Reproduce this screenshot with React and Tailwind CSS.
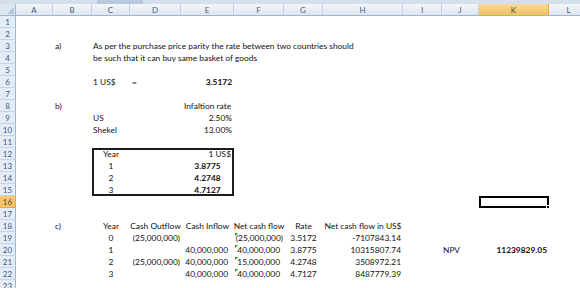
const cols = [
    ['A', 37], ['B', 39], ['C', 38], ['D', 51], ['E', 53], ['F', 50],
    ['G', 39], ['H', 80], ['I', 39], ['J', 37], ['K', 70], ['L', 40],
];

// cell content keyed by row number, then column letter
const sheet = {
    3: {
        B: { t: 'a)', cls: 'pl-[2px]' },
        C: { t: 'As per the purchase price parity the rate between two countries should', cls: 'pl-[1px]' },
    },
    4: { C: { t: 'be such that it can buy same basket of goods', cls: 'pl-[1px]' } },
    6: {
        C: { t: '1 US$', cls: 'pl-[1px]' },
        D: { t: '=', cls: 'pl-[2px]' },
        E: { t: '3.5172', cls: 'justify-end pr-[2px] font-bold' },
    },
    8: {
        B: { t: 'b)', cls: 'pl-[2px]' },
        E: { t: 'Infaltion rate', cls: 'justify-center' },
    },
    9: {
        C: { t: 'US', cls: 'pl-[1px]' },
        E: { t: '2.50%', cls: 'justify-end pr-[2px]' },
    },
    10: {
        C: { t: 'Shekel', cls: 'pl-[1px]' },
        E: { t: '13.00%', cls: 'justify-end pr-[2px]' },
    },
    // boxed table C12:E15
    12: {
        C: { t: 'Year', cls: 'justify-center shadow-[inset_2px_2px_0_0_#1c1c1c]' },
        D: { t: '', cls: 'shadow-[inset_0_2px_0_0_#1c1c1c]' },
        E: { t: '1 US$', cls: 'justify-end pr-[3px] shadow-[inset_-2px_2px_0_0_#1c1c1c]' },
    },
    13: {
        C: { t: '1', cls: 'justify-center shadow-[inset_2px_0_0_0_#1c1c1c]' },
        E: { t: '3.8775', cls: 'justify-center font-bold shadow-[inset_-2px_0_0_0_#1c1c1c]' },
    },
    14: {
        C: { t: '2', cls: 'justify-center shadow-[inset_2px_0_0_0_#1c1c1c]' },
        E: { t: '4.2748', cls: 'justify-center font-bold shadow-[inset_-2px_0_0_0_#1c1c1c]' },
    },
    15: {
        C: { t: '3', cls: 'justify-center shadow-[inset_2px_-2px_0_0_#1c1c1c]' },
        D: { t: '', cls: 'shadow-[inset_0_-2px_0_0_#1c1c1c]' },
        E: { t: '4.7127', cls: 'justify-center font-bold shadow-[inset_-2px_-2px_0_0_#1c1c1c]' },
    },
    18: {
        B: { t: 'c)', cls: 'pl-[2px]' },
        C: { t: 'Year', cls: 'justify-center' },
        D: { t: 'Cash Outflow', cls: 'justify-center' },
        E: { t: 'Cash Inflow', cls: 'justify-center' },
        F: { t: 'Net cash flow', cls: 'justify-center' },
        G: { t: 'Rate', cls: 'justify-center' },
        H: { t: 'Net cash flow in US$', cls: 'justify-center' },
    },
    19: {
        C: { t: '0', cls: 'justify-center' },
        D: { t: '(25,000,000)', cls: 'justify-end pr-[1px]' },
        F: { t: '(25,000,000)', cls: 'justify-end pr-[1px]', flag: true },
        G: { t: '3.5172', cls: 'justify-center' },
        H: { t: '-7107843.14', cls: 'justify-end pr-[2px]' },
    },
    20: {
        C: { t: '1', cls: 'justify-center' },
        E: { t: '40,000,000', cls: 'justify-end pr-[6px]' },
        F: { t: '40,000,000', cls: 'justify-end pr-[4px]', flag: true },
        G: { t: '3.8775', cls: 'justify-center' },
        H: { t: '10315807.74', cls: 'justify-end pr-[2px]' },
        J: { t: 'NPV', cls: 'pl-[1px]' },
        K: { t: '11239829.05', cls: 'justify-end pr-[2px] font-bold' },
    },
    21: {
        C: { t: '2', cls: 'justify-center' },
        D: { t: '(25,000,000)', cls: 'justify-end pr-[1px]' },
        E: { t: '40,000,000', cls: 'justify-end pr-[6px]' },
        F: { t: '15,000,000', cls: 'justify-end pr-[4px]', flag: true },
        G: { t: '4.2748', cls: 'justify-center' },
        H: { t: '3508972.21', cls: 'justify-end pr-[2px]' },
    },
    22: {
        C: { t: '3', cls: 'justify-center' },
        E: { t: '40,000,000', cls: 'justify-end pr-[6px]' },
        F: { t: '40,000,000', cls: 'justify-end pr-[4px]', flag: true },
        G: { t: '4.7127', cls: 'justify-center' },
        H: { t: '8487779.39', cls: 'justify-end pr-[2px]' },
    },
};

const activeRow = 16;
const activeCol = 'K';

const rows = Array.from({ length: 23 }, (_, i) => i + 1);

const App = () => {
    return (
        <div className="w-[580px] h-[288px] overflow-hidden bg-white font-['Lato','Liberation_Sans',sans-serif] select-none">
            {/* ribbon edge */}
            <div className="h-[4px] flex bg-[#d6e0ec]">
                <div className="w-[97px]" />
                <div className="w-[46px] bg-[#b9c9dd]" />
            </div>

            {/* Column headers */}
            <div className="flex h-[12px] border-b border-[#9eb6ce]">
                <div className="w-[16px] shrink-0 relative bg-[#dde6f1] border-r border-[#9eb6ce]">
                    <div className="absolute right-[1px] bottom-[1px] w-0 h-0 border-l-[7px] border-l-transparent border-b-[7px] border-b-[#b5c4d8]" />
                </div>
                {cols.map(([c, w]) => (
                    <div
                        key={c}
                        style={{ width: w }}
                        className={`shrink-0 flex items-center justify-center text-[8px] leading-none border-r ${
                            c === activeCol
                                ? 'bg-gradient-to-b from-[#f9d99f] to-[#f1c15f] border-[#f2a83c] text-[#5a4a2a]'
                                : 'bg-gradient-to-b from-[#f3f6fa] to-[#dfe6ef] border-[#c5d3e2] text-[#4a5f7c]'
                        }`}
                    >
                        {c}
                    </div>
                ))}
            </div>

            {/* Rows */}
            {rows.map((r) => (
                <div key={r} className="flex h-[12px]">
                    <div
                        className={`w-[16px] shrink-0 flex items-center justify-center text-[8px] leading-none border-r border-b ${
                            r === activeRow
                                ? 'bg-[#f6c56d] border-[#f2a83c] text-[#5a4a2a]'
                                : 'bg-[#e4ecf7] border-[#c5d3e2] border-r-[#9eb6ce] text-[#3f5a80]'
                        }`}
                    >
                        {r}
                    </div>
                    {cols.map(([c, w]) => {
                        const cell = sheet[r]?.[c];
                        const active = r === activeRow && c === activeCol;
                        return (
                            <div
                                key={c}
                                style={{ width: w }}
                                className={`shrink-0 relative flex items-center whitespace-nowrap text-[8.4px] leading-none text-[#111] ${
                                    cell ? cell.cls : ''
                                } ${active ? 'border-2 border-black' : ''}`}
                            >
                                {cell?.flag && (
                                    <span className="absolute left-[1px] top-[1px] w-0 h-0 border-t-[3px] border-t-[#18a018] border-r-[3px] border-r-transparent" />
                                )}
                                {cell?.t}
                                {active && (
                                    <span className="absolute right-[-3px] bottom-[-3px] w-[4px] h-[4px] bg-black border border-white" />
                                )}
                            </div>
                        );
                    })}
                </div>
            ))}
        </div>
    );
};

export default App;
